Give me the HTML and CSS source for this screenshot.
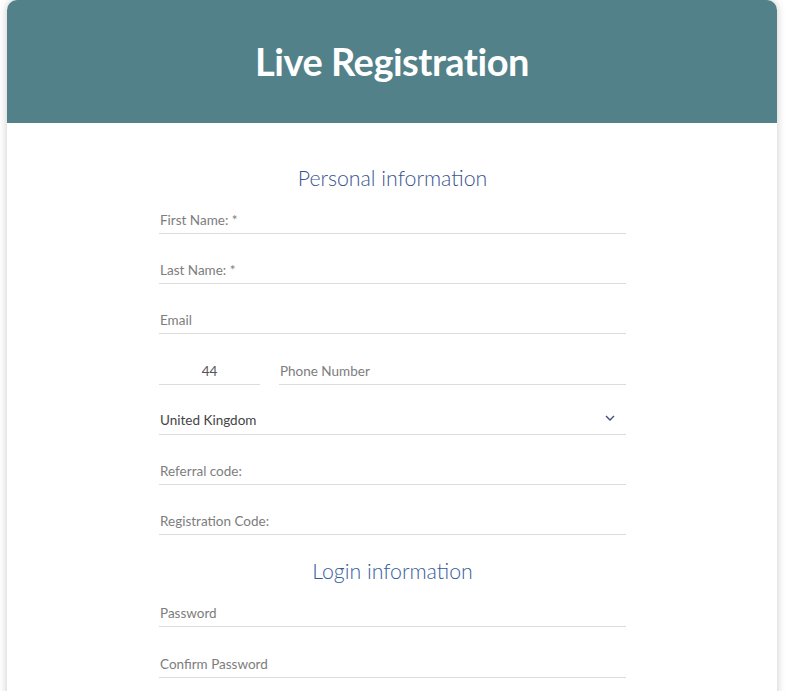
FILE: index.html
```html
<!DOCTYPE html>
<html lang="en">
<head>
<meta charset="utf-8">
<title>Live Registration</title>
<link rel="stylesheet" href="styles.css">
</head>
<body>
<div class="card">
  <header class="card-header">
    <h1 class="title">Live Registration</h1>
  </header>
  <main class="card-body">
    <form class="form">
      <h2 class="section-title">Personal information</h2>
      <div class="field"><input class="input" type="text" placeholder="First Name: *"></div>
      <div class="field"><input class="input" type="text" placeholder="Last Name: *"></div>
      <div class="field"><input class="input" type="email" placeholder="Email"></div>
      <div class="field field-row">
        <input class="input input-code" type="text" value="44">
        <input class="input input-phone" type="tel" placeholder="Phone Number">
      </div>
      <div class="field select-field">
        <select class="input select">
          <option>United Kingdom</option>
        </select>
        <svg class="chevron" width="10" height="6" viewBox="0 0 10 6" aria-hidden="true"><path d="M1 1l4 4 4-4" fill="none" stroke="#3f4f78" stroke-width="1.4"/></svg>
      </div>
      <div class="field"><input class="input" type="text" placeholder="Referral code:"></div>
      <div class="field"><input class="input" type="text" placeholder="Registration Code:"></div>

      <h2 class="section-title section-title-login">Login information</h2>
      <div class="field"><input class="input" type="password" placeholder="Password"></div>
      <div class="field"><input class="input" type="password" placeholder="Confirm Password"></div>
    </form>
  </main>
</div>
</body>
</html>
```
FILE: styles.css
```css
* { box-sizing: border-box; }
html, body { margin: 0; padding: 0; background: #ffffff; }
body {
  font-family: Lato, "Liberation Sans", Arial, sans-serif;
  height: 691px;
  overflow: hidden;
}
.card {
  margin: 0 11px 0 7px;
  background: #ffffff;
  border-radius: 10px 10px 0 0;
  box-shadow: 0 0 9px rgba(0,0,0,0.22);
  min-height: 760px;
  overflow: hidden;
}
.card-header {
  height: 123px;
  background: #538189;
  display: flex;
  align-items: center;
  justify-content: center;
}
.title {
  margin: 0;
  color: #ffffff;
  font-family: Lato, "Liberation Sans", Arial, sans-serif;
  font-weight: 700;
  font-size: 38px;
  letter-spacing: -0.5px;
  line-height: 1;
  padding-bottom: 2px;
}
.card-body {
  padding-top: 40px;
  display: flex;
  justify-content: center;
}
.form {
  width: 467px;
  margin-left: 1px;
  display: flex;
  flex-direction: column;
  gap: 12.2px;
}
.section-title {
  margin: 0 0 -12.2px;
  padding-bottom: 2px;
  text-align: center;
  font-family: Lato, "Liberation Sans", Arial, sans-serif;
  font-weight: 300;
  font-size: 21.3px;
  line-height: 31px;
  color: #3a5490;
}
.section-title-login { margin-top: 9px; padding-bottom: 3px; line-height: 30px; color: #365e9c; }
.field {
  height: 38px;
  display: flex;
  align-items: flex-end;
}
.field-row { gap: 19px; }
.input {
  width: 100%;
  height: 24px;
  border: 0;
  border-bottom: 1px solid #dcdcdc;
  padding: 0 1px 3px;
  margin: 0;
  font-family: Lato, "Liberation Sans", Arial, sans-serif;
  font-weight: 400;
  font-size: 13.5px;
  color: #4a4a4a;
  background: transparent;
  outline: none;
  border-radius: 0;
}
.input::placeholder { color: #7d7d7d; opacity: 1; }
.input-code { width: 101px; flex: none; text-align: center; color: #555; }
.input-phone { flex: 1; }
.select-field { position: relative; }
.select {
  appearance: none;
  -webkit-appearance: none;
  color: #444;
  height: 25px;
}
.chevron {
  position: absolute;
  right: 11px;
  bottom: 14px;
}
```
